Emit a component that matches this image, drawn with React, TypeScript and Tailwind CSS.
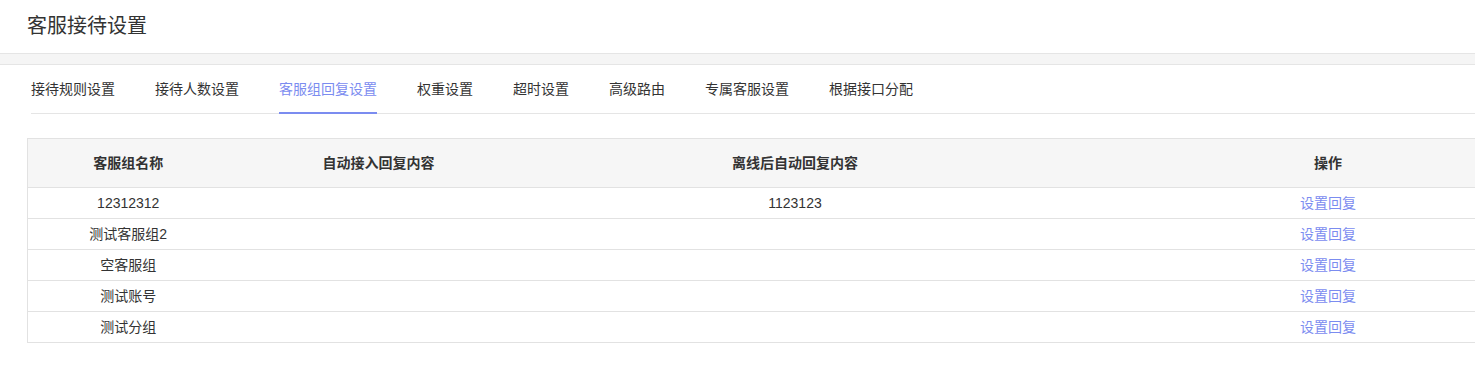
import React from "react";

const tabs = ["接待规则设置", "接待人数设置", "客服组回复设置", "权重设置", "超时设置", "高级路由", "专属客服设置", "根据接口分配"];
const rows = [
  { name: "12312312", auto: "", offline: "1123123" },
  { name: "测试客服组2", auto: "", offline: "" },
  { name: "空客服组", auto: "", offline: "" },
  { name: "测试账号", auto: "", offline: "" },
  { name: "测试分组", auto: "", offline: "" },
];

export default function App() {
  return (
    <div
      className="w-[1475px] h-[378px] overflow-hidden bg-white text-[#333]"
      style={{ fontFamily: '"Liberation Sans", "Noto Sans CJK SC", sans-serif' }}
    >
      <div className="h-[54px] border-b border-[#e5e5e5] pl-[27px] flex items-center">
        <h1 className="text-[20px] leading-[24px] text-[#333] pb-[1px]">客服接待设置</h1>
      </div>
      <div className="h-[11px] bg-[#f5f5f5] border-b border-[#e5e5e5]" />
      <div className="ml-[31px] flex border-b border-[#e5e5e5] h-[49px]">
        {tabs.map((t, i) => (
          <div
            key={t}
            className={
              i === 2
                ? "mr-[40px] h-[49px] leading-[48px] text-[14px] text-[#7b8cf0] border-b-2 border-[#7b8cf0] -mb-px"
                : "mr-[40px] h-[48px] leading-[48px] text-[14px] text-[#333]"
            }
          >
            {t}
          </div>
        ))}
      </div>
      <div className="ml-[27px] mt-[24px]">
        <table className="table-fixed w-[1567px] border-collapse text-[14px]">
          <colgroup>
            <col className="w-[201px]" />
            <col className="w-[300px]" />
            <col className="w-[533px]" />
            <col className="w-[533px]" />
          </colgroup>
          <thead>
            <tr className="bg-[#f6f6f6] h-[49px]">
              <th className="border border-[#e2e2e2] border-r-0 font-bold text-[#333] text-center">客服组名称</th>
              <th className="border-y border-[#e2e2e2] font-bold text-[#333] text-center">自动接入回复内容</th>
              <th className="border-y border-[#e2e2e2] font-bold text-[#333] text-center">离线后自动回复内容</th>
              <th className="border-y border-[#e2e2e2] font-bold text-[#333] text-center">操作</th>
            </tr>
          </thead>
          <tbody>
            {rows.map((r) => (
              <tr key={r.name} className="h-[31px]">
                <td className="border-l border-b border-[#e2e2e2] text-center">{r.name}</td>
                <td className="border-b border-[#e2e2e2] text-center">{r.auto}</td>
                <td className="border-b border-[#e2e2e2] text-center">{r.offline}</td>
                <td className="border-b border-[#e2e2e2] text-center">
                  <span className="text-[#7b8cf0] cursor-pointer">设置回复</span>
                </td>
              </tr>
            ))}
          </tbody>
        </table>
      </div>
    </div>
  );
}
